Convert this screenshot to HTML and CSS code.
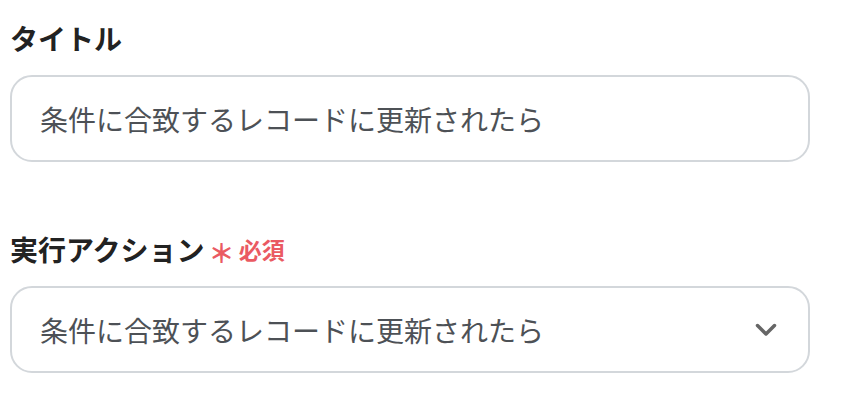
FILE: index.html
```html
<!DOCTYPE html>
<html lang="ja">
<head>
<meta charset="utf-8">
<link rel="stylesheet" href="styles.css">
</head>
<body>
<div class="form">
  <div class="field">
    <div class="label">タイトル</div>
    <div class="box">条件に合致するレコードに更新されたら</div>
  </div>
  <div class="field">
    <div class="label">実行アクション<span class="req"><span class="ast">＊</span>必須</span></div>
    <div class="box select">
      <span>条件に合致するレコードに更新されたら</span>
      <svg class="chev" width="22" height="14" viewBox="0 0 22 14"><path d="M2.5 2.5 L11 11 L19.5 2.5" fill="none" stroke="#666" stroke-width="3.5" stroke-linecap="round" stroke-linejoin="round"/></svg>
    </div>
  </div>
</div>
</body>
</html>
```
FILE: styles.css
```css
html, body { margin: 0; padding: 0; background: #fff; }
body { font-family: "Noto Sans CJK JP", "Noto Sans", sans-serif; }
.form {
  display: flex;
  flex-direction: column;
  gap: 67px;
  padding: 18px 0 0 10px;
  width: 800px;
}
.field { display: flex; flex-direction: column; gap: 17px; }
.label {
  font-size: 28px;
  font-weight: 700;
  line-height: 40px;
  color: #222;
  padding-left: 0;
  display: flex;
  align-items: center;
}
.req {
  color: #ea5a62;
  font-size: 23px;
  font-weight: 700;
  margin-left: 4px;
  display: inline-flex;
  align-items: center;
}
.ast { font-size: 26px; margin-right: 4px; position: relative; top: 3px; }
.box {
  box-sizing: border-box;
  height: 87px;
  border: 2px solid #d3d7db;
  border-radius: 22px;
  padding: 0 28px;
  display: flex;
  align-items: center;
  font-size: 28px;
  color: #4d5156;
}
.select { justify-content: space-between; padding-right: 31px; }
.chev { display: block; }
```
